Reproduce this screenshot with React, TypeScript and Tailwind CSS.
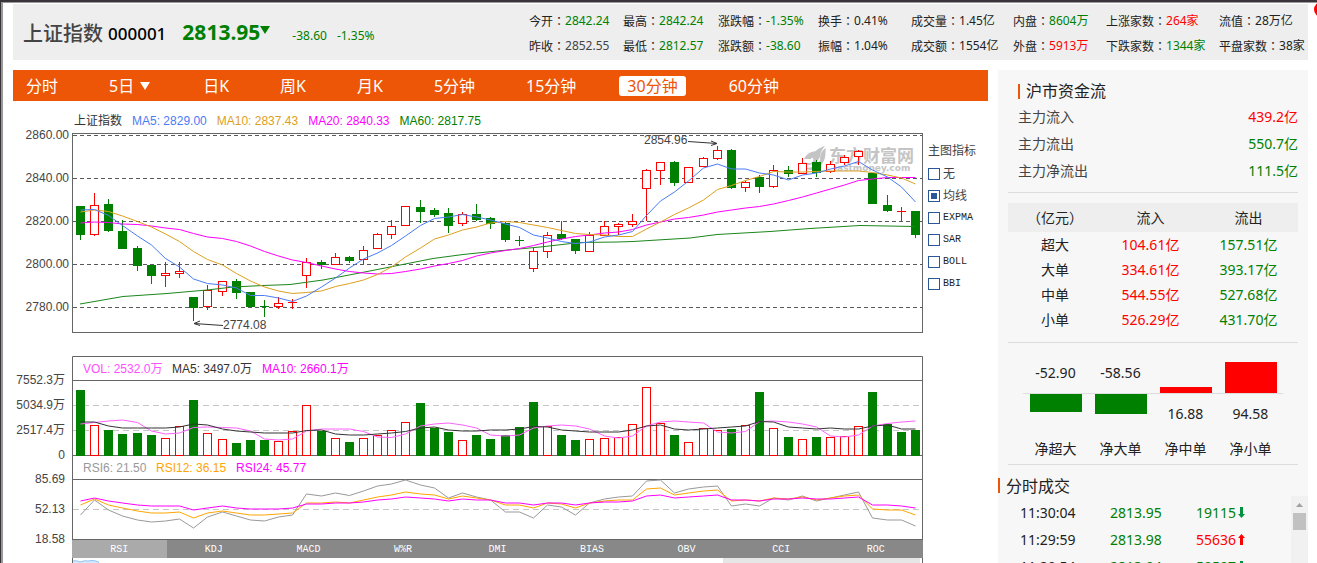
import { type ReactNode } from "react";

const SANS = "font-['Noto_Sans','Noto_Sans_CJK_SC',sans-serif]";
const ARIAL = "font-['Liberation_Sans','Noto_Sans_CJK_SC',sans-serif]";
const MONO = "font-['Liberation_Mono','Noto_Sans_CJK_SC',monospace]";
const FULLWIDTH = "font-['Noto_Sans_CJK_TC',sans-serif]";

const UP = "#ff0000";
const DOWN = "#008000";

/* Charts share one horizontal scale: bar i is centred on xOf(i). */
const xOf = (i: number) => Math.round(80 + i * 14.15) + 0.5;
const line = (ys: number[]) => ys.map((y, i) => `${xOf(i)},${y}`).join(" ");

/* direction, high, body top, body bottom, low */
type Candle = ["u" | "d", number, number, number, number];
const candles: Candle[] = [
  ["d", 206, 206, 235, 240], ["u", 193, 205, 234, 236], ["d", 199, 204, 231, 232], ["d", 220, 231, 249, 249],
  ["d", 246, 248, 266, 271], ["d", 265, 265, 276, 284], ["u", 262, 273, 275, 287], ["u", 262, 271, 273, 278],
  ["d", 297, 297, 308, 321], ["u", 285, 290, 306, 310], ["u", 281, 281, 291, 296], ["d", 279, 281, 293, 299],
  ["d", 292, 292, 307, 307], ["d", 300, 306, 307, 317], ["u", 297, 303, 306, 309], ["u", 299, 302, 302, 309],
  ["u", 258, 262, 275, 288], ["d", 260, 262, 265, 269], ["u", 253, 257, 264, 264], ["d", 256, 257, 261, 263],
  ["u", 246, 250, 259, 264], ["u", 233, 234, 248, 249], ["u", 220, 226, 234, 239], ["u", 206, 206, 225, 226],
  ["d", 200, 207, 212, 223], ["d", 208, 210, 215, 217], ["d", 208, 213, 226, 233], ["u", 212, 214, 223, 226],
  ["d", 204, 214, 220, 221], ["d", 217, 218, 224, 229], ["d", 222, 223, 240, 242], ["d", 236, 240, 241, 246],
  ["u", 248, 251, 268, 272], ["u", 232, 235, 251, 258], ["d", 221, 234, 239, 240], ["d", 239, 239, 251, 254],
  ["u", 232, 235, 251, 251], ["u", 221, 226, 235, 236], ["u", 223, 224, 226, 235], ["u", 214, 221, 224, 227],
  ["u", 169, 170, 188, 221], ["u", 162, 162, 170, 185], ["d", 161, 162, 183, 186], ["u", 167, 167, 182, 182],
  ["u", 157, 158, 166, 167], ["u", 146, 150, 158, 160], ["d", 149, 150, 188, 189], ["u", 181, 182, 187, 192],
  ["d", 175, 177, 187, 193], ["u", 165, 170, 186, 188], ["d", 166, 170, 174, 177], ["u", 158, 163, 173, 173],
  ["d", 160, 162, 173, 177], ["u", 161, 164, 171, 173], ["u", 155, 157, 162, 165], ["u", 150, 151, 156, 165],
  ["d", 173, 173, 204, 204], ["d", 195, 205, 211, 212], ["u", 207, 211, 211, 221], ["d", 211, 211, 235, 238],
];

const ma5 = [210, 209.5, 215.5, 225.5, 236, 245, 258.5, 267, 279, 283.5, 285, 288, 295.5, 295.5, 298, 301.5, 296, 287, 278, 268, 259, 253, 245.5, 236, 225.5, 218.5, 217, 214.5, 217, 220, 224, 227.5, 235, 238, 241.5, 243.5, 242, 237, 235, 231.5, 215.5, 201, 192, 181, 168, 164, 169, 169, 173, 175, 180, 175, 173, 169, 166, 161.5, 170, 177, 187, 202];
const ma10 = [212, 210, 211.5, 216, 221.5, 227, 234, 241.5, 251.5, 259.5, 265, 273.5, 281, 287, 291, 293.5, 292.5, 291, 286.5, 283.5, 280, 274.5, 267, 257, 248, 239, 235, 230, 227, 223, 221.5, 222.5, 225, 227.5, 230.5, 233.5, 234.5, 235, 236.5, 236.5, 229, 222, 214.5, 208, 200, 189.5, 185.5, 180.5, 176.5, 171.5, 172, 172, 171.5, 171, 171, 171, 172.5, 175, 178, 184];
const ma20 = [223, 222, 222.5, 224, 224.5, 226, 228, 229.5, 233.5, 237, 238.5, 241.5, 246, 251.5, 256, 260, 262.5, 266, 269, 271.5, 273, 274, 273.5, 271.5, 269, 266, 263.5, 260.5, 256, 253, 250.5, 248.5, 245.5, 242, 239, 236.5, 235, 233, 232, 229.5, 225, 222, 219, 217.5, 215, 212, 210, 208, 206.5, 204, 200.5, 197, 193, 189, 185, 180.5, 179, 177.5, 177.5, 177.5];
const ma60 = "80,304 123,296.5 167,293.5 207,290 233,287 263,285.5 290,284.5 323,280 357,273.5 390,267 433,258.5 463,254.5 497,251 540,247 580,242.5 617,242 633,241.5 690,238 717,234.5 770,231.5 810,228.5 860,225.5 915,226.5";

const volTops = [390, 425, 430, 434, 433, 435, 438, 426, 400, 433, 439, 443, 440, 440, 441, 431, 405, 431, 438, 442, 438, 435, 430, 422, 403, 428, 432, 440, 435, 439, 435, 427, 402, 426, 435, 440, 439, 438, 437, 424, 387, 423, 435, 442, 428, 430, 429, 425, 392, 428, 437, 439, 437, 437, 436, 426, 392, 424, 432, 430];
const volKinds = "duddddu" + "uduudddu" + "uududuuu" + "udddudd" + "dddudd" + "uuuu" + "uuduuu" + "dudududuuu" + "dddd";
const volMa5 = [424, 422.5, 421, 420, 422.5, 431, 434, 433, 427.5, 427, 427.5, 428, 431, 439, 440, 439, 431, 429, 429, 429, 431.5, 437, 437.5, 434, 426, 424, 423, 425, 428, 435, 436, 435, 428, 426, 425, 426, 429, 436, 438, 436, 426, 422, 421, 422, 423, 432, 433, 431.5, 421.5, 421, 422, 424, 427, 436, 437, 435, 426, 423.5, 422, 421];
const volMa10 = [422, 422, 426, 428, 428, 428, 428, 427, 424, 425, 429, 431, 432, 433, 433, 433, 430.5, 430, 434, 435, 435, 434, 433, 431.5, 428, 427, 430, 431, 431, 430, 430, 429, 426.5, 427, 430, 431, 432, 432, 432, 430, 426, 425, 429, 430, 429, 428, 427, 426, 421.5, 422, 427, 428, 429, 428, 429, 429, 426, 425, 429, 429];

const rsi6 = [515, 500, 510, 516, 520, 522, 521, 519, 528, 517, 512, 516, 520, 521, 517, 515, 494, 496, 493, 495.5, 491, 486, 484, 480, 485, 488, 498, 493, 497, 500, 512, 512, 518, 505, 507, 515, 503, 499, 497, 496, 481, 480, 493, 489, 487, 486, 506, 504, 506, 498, 500, 496, 501, 498, 495, 492, 518, 520, 520, 526];
const rsi12 = [505, 499, 505, 508, 511, 513, 513, 512, 518, 513, 511, 513, 515, 515, 514, 513, 503, 503, 502, 503, 500, 497, 495, 492, 494, 495, 499, 496, 498, 500, 505, 505, 508, 503, 504, 508, 503, 501, 500, 500, 489, 488, 495, 493, 491, 490, 501, 500, 501, 498, 499, 497, 500, 498, 496, 495, 509, 510, 510, 515];
const rsi24 = [501, 498, 501, 503, 505, 506, 506, 506, 510, 508, 506, 508, 509, 509, 509, 508, 504, 504, 503, 503, 502, 500, 499, 497, 498, 499, 501, 499, 500, 500, 503, 503, 505, 503, 503, 505, 503, 502, 502, 501, 496, 495, 498, 497, 496, 495, 500, 500, 501, 499, 499, 498, 499, 499, 498, 497, 505, 505, 506, 508];

const W = ({ children }: { children: ReactNode }) => <span className={FULLWIDTH}>{children}</span>;

const stats: [string, string, string][] = [
  ["今开", "2842.24", "text-[#008000]"], ["昨收", "2852.55", "text-[#444]"],
  ["最高", "2842.24", "text-[#008000]"], ["最低", "2812.57", "text-[#008000]"],
  ["涨跌幅", "-1.35%", "text-[#008000]"], ["涨跌额", "-38.60", "text-[#008000]"],
  ["换手", "0.41%", ""], ["振幅", "1.04%", ""],
  ["成交量", "1.45亿", ""], ["成交额", "1554亿", ""],
  ["内盘", "8604万", "text-[#008000]"], ["外盘", "5913万", "text-[#ff0000]"],
  ["上涨家数", "264家", "text-[#ff0000]"], ["下跌家数", "1344家", "text-[#008000]"],
  ["流值", "28万亿", ""], ["平盘家数", "38家", ""],
];

function Header() {
  return (
    <header className="flex h-14 items-center justify-between bg-[#eee] pl-[10px]">
      <div className="flex items-center whitespace-nowrap">
        <h1 className="mt-[3px] text-[20px] leading-7 font-medium text-[#444]">上证指数</h1>
        <span className="mt-[3px] ml-[5px] text-[17px] leading-7 font-medium text-black">000001</span>
        <span className="ml-4 text-[21px] leading-7 font-bold text-[#008000]">2813.95</span>
        <svg className="mb-1 h-2 w-[10px]" viewBox="0 0 10 8" fill={DOWN}><path d="M0 0h10L5 8z" /></svg>
        <span className="mt-[7px] ml-[22px] text-xs text-[#008000]">-38.60</span>
        <span className="mt-[7px] ml-[10px] text-xs text-[#008000]">-1.35%</span>
      </div>
      <dl className="grid grid-flow-col grid-cols-[94px_95px_100px_93px_102px_93px_113px_89px] grid-rows-[25px_25px] pt-[2px] text-xs leading-[25px] whitespace-nowrap text-[#222]">
        {stats.map(([label, value, tone]) => (
          <div key={label} className="flex">
            <dt>{label}<W>：</W></dt>
            <dd className={tone}>{value}</dd>
          </div>
        ))}
      </dl>
    </header>
  );
}

function PeriodNav() {
  const items = ["分时", "5日", "日K", "周K", "月K", "5分钟", "15分钟", "30分钟", "60分钟"];
  return (
    <nav className="flex h-[31px] items-center gap-[35px] bg-[#ec5606] pl-[5px] text-base leading-5 whitespace-nowrap text-white">
      {items.map((t) => (
        <button
          key={t}
          type="button"
          className={t === "30分钟" ? "flex h-5 items-center rounded-[3px] bg-white px-2 text-[#ec5606]" : "flex h-5 items-center px-2"}
        >
          {t}
          {t === "5日" && <svg className="mr-[2px] ml-[6px] h-2 w-[10px]" viewBox="0 0 10 8" fill="#fff"><path d="M0 0h10L5 8z" /></svg>}
        </button>
      ))}
    </nav>
  );
}

function Watermark() {
  return (
    <g fill="#c4c4c4">
      <path d="M804 159c3-6 8-8 14-8-4 2-5 5-7 8zM812 158c1-6 6-10 13-12-3 3-5 7-5 11-2 4-5 6-9 7 2-2 3-4 2-6zM820 160c0-6 2-10 6-12-1 4 0 5-1 9-1 6-5 11-11 13-3 0-6 0-8-2 7 0 12-3 14-8zM804 162c4 2 8 1 11-1-3 5-8 5-11 1z" />
      <text x="829" y="162" fontSize="17" fontWeight="700" fontFamily="'Noto Sans CJK SC',sans-serif">东方财富网</text>
      <text x="831" y="171" fontSize="9" fontWeight="700" fontFamily="'DejaVu Sans',sans-serif">eastmoney.com</text>
    </g>
  );
}

function PriceChart() {
  const grid: [number, string][] = [[135, "2860.00"], [178, "2840.00"], [221, "2820.00"], [264, "2800.00"], [307, "2780.00"]];
  return (
    <svg role="img" aria-label="30分钟K线图" className={`block w-full ${ARIAL}`} viewBox="13 127 910 209" fontSize="12" fill="#444">
      {grid.map(([y, t]) => (
        <g key={t}>
          <text x="69" y={y + 4} textAnchor="end">{t}</text>
          <path d={`M73 ${y}.5H922`} stroke="#5b585d" strokeDasharray="4 3" />
        </g>
      ))}
      <rect x="72.5" y="133.5" width="850" height="199" fill="none" stroke="#666" />
      <Watermark />
      <g shapeRendering="crispEdges">
        {candles.map(([k, hi, top, bot, lo], i) => {
          const x = xOf(i);
          if (k === "d" || top === bot)
            return (
              <g key={i} stroke={k === "d" ? DOWN : UP} fill={k === "d" ? DOWN : UP}>
                <path d={`M${x} ${hi}V${lo}`} />
                <rect x={x - 4.5} y={top} width="9" height={Math.max(1, bot - top)} stroke="none" />
              </g>
            );
          return (
            <g key={i} stroke={UP} fill="#fff">
              <path d={`M${x} ${hi}V${top}M${x} ${bot}V${lo}`} />
              <rect x={x - 4} y={top + 0.5} width="8" height={bot - top} />
            </g>
          );
        })}
      </g>
      <g fill="none">
        <polyline points={ma60} stroke="#1c861c" />
        <polyline points={line(ma20)} stroke="#f0f" />
        <polyline points={line(ma10)} stroke="#dda01e" />
        <polyline points={line(ma5)} stroke="#4b7cf5" />
        <path d="M688 141.5L717 143.5M711 141l6 2.5-6 2M223 325.500L194 323.500M200 321l-6 2.500 6 2" stroke="#333" />
      </g>
      <text x="644" y="144">2854.96</text>
      <text x="223" y="329">2774.08</text>
    </svg>
  );
}

function IndicatorChart() {
  const labels: [number, string][] = [[384, "7552.3万"], [409, "5034.9万"], [434, "2517.4万"], [459, "0"], [483, "85.69"], [513, "52.13"], [543, "18.58"]];
  return (
    <svg role="img" aria-label="成交量与RSI指标图" className={`block w-full overflow-visible ${ARIAL}`} viewBox="13 356 910 184" fontSize="12" fill="#444">
      {labels.map(([y, t]) => <text key={t} x="65" y={y} textAnchor="end">{t}</text>)}
      <path d="M73 405.500H922M73 430.500H922M73 509.500H922" stroke="#c6c6c6" strokeDasharray="6 4" />
      <path d="M72.500 540V356.500H922.500V540M72 380.500H923M72 455.500H923M72 479.500H923M72 539.500H923" stroke="#666" fill="none" />
      <text x="83" y="373" fill="#ff50ff">VOL: 2532.0万</text>
      <text x="172" y="373" fill="#333">MA5: 3497.0万</text>
      <text x="262" y="373" fill="#f0f">MA10: 2660.1万</text>
      <g shapeRendering="crispEdges">
        {volTops.map((top, i) =>
          volKinds[i] === "d" ? (
            <rect key={i} x={xOf(i) - 4.5} y={top} width="9" height={456 - top} fill={DOWN} />
          ) : (
            <rect key={i} x={xOf(i) - 4} y={top + 0.5} width="8" height={455 - top} fill="#fff" stroke={UP} />
          ),
        )}
      </g>
      <g fill="none">
        <polyline points={line(volMa5)} stroke="#ff60ff" />
        <polyline points={line(volMa10)} stroke="#333" />
        <polyline points={line(rsi6)} stroke="#999" />
        <polyline points={line(rsi12)} stroke="#ffa500" />
        <polyline points={line(rsi24)} stroke="#f0f" />
      </g>
      <text x="83" y="472" fill="#999">RSI6: 21.50</text>
      <text x="156" y="472" fill="#ffa500">RSI12: 36.15</text>
      <text x="236" y="472" fill="#f0f">RSI24: 45.77</text>
    </svg>
  );
}

function Overlays() {
  const items = ["无", "均线", "EXPMA", "SAR", "BOLL", "BBI"];
  return (
    <fieldset className="w-[60px] shrink-0 text-xs text-[#444]">
      <legend className={`h-[23px] pt-[3px] leading-4 ${ARIAL}`}>主图指标</legend>
      {items.map((t, i) => (
        <label key={t} className="flex h-[22px] items-center gap-[3px]">
          <input
            type="checkbox"
            defaultChecked={t === "均线"}
            className="size-3 shrink-0 appearance-none border border-[#2b579a] bg-white checked:bg-[#2b579a] checked:shadow-[inset_0_0_0_2px_#fff]"
          />
          <span className={i > 1 ? `text-[10px] text-[#222] ${MONO}` : ""}>{t}</span>
        </label>
      ))}
    </fieldset>
  );
}

function Charts() {
  const tabs = ["RSI", "KDJ", "MACD", "W%R", "DMI", "BIAS", "OBV", "CCI", "ROC"];
  return (
    <section>
      <div className={`flex h-[26px] items-end gap-[10px] pl-[61px] text-xs leading-3 whitespace-nowrap ${ARIAL}`}>
        <span className="text-[#333]">上证指数</span>
        <span className="text-[#4b7cf5]">MA5: 2829.00</span>
        <span className="text-[#dda01e]">MA10: 2837.43</span>
        <span className="text-[#f0f]">MA20: 2840.33</span>
        <span className="text-[#008000]">MA60: 2817.75</span>
      </div>
      <div className="flex gap-[5px]">
        <div className="min-w-0 flex-1">
          <PriceChart />
          <div className="h-5" />
          <IndicatorChart />
          <div className={`ml-[59px] grid h-[18px] grid-cols-9 bg-[#888] text-[10px] leading-4 text-white ${MONO}`}>
            {tabs.map((t) => (
              <button key={t} type="button" className={t === "RSI" ? "bg-[#aaa] pt-[2px]" : "pt-[2px]"}>{t}</button>
            ))}
          </div>
          <div className="ml-[59px] flex h-16 justify-between border-x border-[#666] pr-[2px]">
            <svg className="mt-[2px] h-4 w-[26px]" viewBox="0 0 26 16" fill="#d5eaff" stroke="#8fc3f5">
              <path d="M-1 16V1q5-1 8 1 5-2 8-1 4-1 8 0 3 0 3 3v12" />
            </svg>
            <div className="w-[197px] bg-[#e6e6e6]" />
          </div>
        </div>
        <div className="pt-[13px]"><Overlays /></div>
      </div>
    </section>
  );
}

function Trade({ time, price, vol, up }: { time: string; price: string; vol: string; up?: boolean }) {
  return (
    <tr className="h-[27px]">
      <td className="w-[112px] pl-[22px] text-[#222]">{time}</td>
      <td className="w-[86px] text-[#008000]">{price}</td>
      <td className={up ? "text-[#ff0000]" : "text-[#008000]"}>
        <span className="flex items-center">
          {vol}
          <svg className="ml-[2px] h-[11px] w-[7px]" viewBox="0 0 7 11" fill={up ? "#ff0000" : "#00923f"}>
            <path d={up ? "M3.500 0L7 4H5v7H2V4H0z" : "M3.500 11L7 7H5V0H2v7H0z"} />
          </svg>
        </span>
      </td>
    </tr>
  );
}

function Sidebar() {
  const flows: [string, string, string][] = [
    ["主力流入", "439.2亿", "text-[#ff0000]"],
    ["主力流出", "550.7亿", "text-[#008000]"],
    ["主力净流出", "111.5亿", "text-[#008000]"],
  ];
  const orders = [["超大", "104.61亿", "157.51亿"], ["大单", "334.61亿", "393.17亿"], ["中单", "544.55亿", "527.68亿"], ["小单", "526.29亿", "431.70亿"]];
  const nets: [string, string, number][] = [["净超大", "-52.90", -18], ["净大单", "-58.56", -20], ["净中单", "16.88", 6], ["净小单", "94.58", 31]];
  return (
    <aside className="w-[310px] shrink-0 bg-[#f7f7f7] text-sm text-[#222]">
      <div className="mx-[10px] border-b border-[#ddd] px-[10px] pt-[10px] pb-2">
        <h2 className="mb-px flex h-[22px] items-center gap-[6px] text-base leading-5">
          <span className="h-[15px] w-[2px] bg-[#ec5606]" />沪市资金流
        </h2>
        <dl className="-mr-[10px]">
          {flows.map(([k, v, tone]) => (
            <div key={k} className="flex h-[27px] items-center justify-between">
              <dt className="text-[#444]">{k}</dt>
              <dd className={tone}>{v}</dd>
            </div>
          ))}
        </dl>
      </div>
      <div className="mx-[10px] border-b border-[#ddd] pt-[10px] pb-[10px]">
        <table className="w-full table-fixed text-center leading-[25px]">
          <thead>
            <tr className="h-[29px] bg-[#eee]">
              <th className="w-[94px] font-normal"><W>（</W>亿元<W>）</W></th>
              <th className="w-[97px] font-normal">流入</th>
              <th className="font-normal">流出</th>
            </tr>
          </thead>
          <tbody>
            {orders.map(([k, a, b]) => (
              <tr key={k}>
                <td>{k}</td>
                <td className="text-[#ff0000]">{a}</td>
                <td className="text-[#008000]">{b}</td>
              </tr>
            ))}
          </tbody>
        </table>
      </div>
      <div className="mx-[10px] border-b border-[#ddd] px-[15px] pb-[5px] text-center">
        <div className="grid grid-cols-4 leading-5">
          {nets.map(([k, v, h]) => (
            <div key={k}>
              <div className="flex h-[51px] flex-col items-center justify-end border-b border-[#ddd]">
                {h > 0 ? <div className="w-[52px] bg-[#ff0000]" style={{ height: h }} /> : <span className="mb-[10px]">{v}</span>}
              </div>
              <div className="flex h-[45px] flex-col items-center">
                {h < 0 ? <div className="w-[52px] bg-[#008000]" style={{ height: -h }} /> : <span className="mt-[10px]">{v}</span>}
              </div>
              <div>{k}</div>
            </div>
          ))}
        </div>
      </div>
      <h2 className="flex h-[31px] items-end gap-[6px] pt-[10px] text-base leading-5">
        <span className="mb-[3px] h-[15px] w-[2px] bg-[#ec5606]" />分时成交
      </h2>
      <div className="flex">
        <table className="mt-[3px] flex-1">
          <tbody>
            <Trade time="11:30:04" price="2813.95" vol="19115" />
            <Trade time="11:29:59" price="2813.98" vol="55636" up />
            <Trade time="11:29:54" price="2813.94" vol="50507" />
          </tbody>
        </table>
        <div className="flex w-[17px] flex-col items-center bg-[#f1f1f1] pt-[7px]">
          <svg className="h-1 w-[7px]" viewBox="0 0 7 4" fill="#a0a0a0"><path d="M3.500 0L7 4H0z" /></svg>
          <div className="mt-[6px] h-[17px] w-[13px] bg-[#c1c1c1]" />
        </div>
      </div>
    </aside>
  );
}

export default function App() {
  return (
    <div className={`relative h-screen overflow-hidden border-t-2 border-l border-[#38343a] bg-white ${SANS}`}>
      <div className="h-full border-t border-l-2 border-[#999] pt-px pr-[9px] pl-[10px]">
        <Header />
        <main className="mt-[10px] flex gap-[10px]">
          <div className="min-w-0 flex-1">
            <PeriodNav />
            <Charts />
          </div>
          <Sidebar />
        </main>
      </div>
      <span className="absolute top-0 -right-3 size-[15px] rounded-full bg-[#f00]" />
    </div>
  );
}
